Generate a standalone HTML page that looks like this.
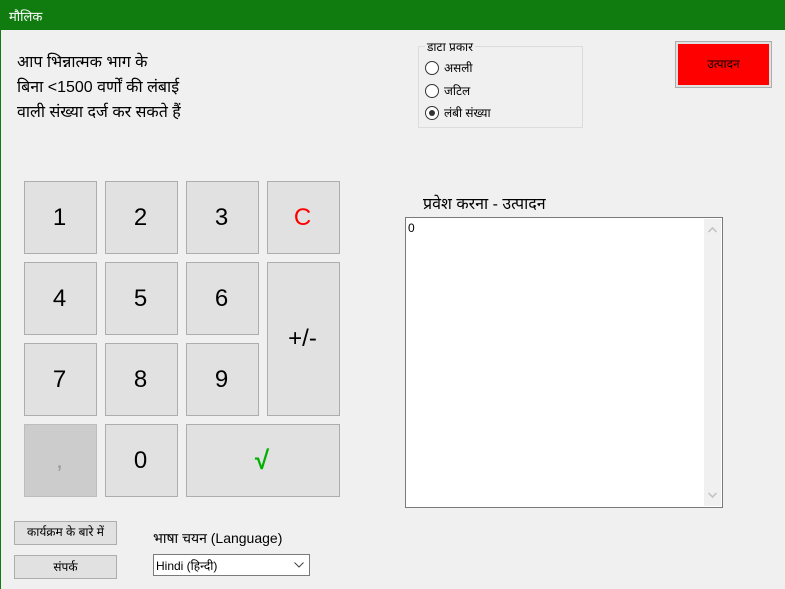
<!DOCTYPE html>
<html><head><meta charset="utf-8"><style>
*{box-sizing:border-box;margin:0;padding:0}
body{width:785px;height:589px;background:#f0f0f0;position:relative;overflow:hidden;font-family:"Liberation Sans","Noto Sans CJK SC",sans-serif;color:#000}
.a{position:absolute}
.title{left:0;top:0;width:785px;height:30px;background:#107c10;color:#fff;font-size:13px;padding:7px 0 0 9px}
.lb{left:0;top:30px;width:1px;height:559px;background:#107c10}
.k{position:absolute;width:73px;height:73px;background:#e1e1e1;border:1px solid #adadad;display:flex;align-items:center;justify-content:center;font-size:24px;padding-right:2px}
.rad{position:absolute;width:14px;height:14px;border:1px solid #333;border-radius:50%;background:#fff}
.btn{position:absolute;background:#e1e1e1;border:1px solid #adadad;font-size:12px;text-align:center}
</style></head><body>
<div class="a title">मौलिक</div>
<div class="a lb"></div>
<div class="a" style="left:17px;top:50px;font-size:16px;line-height:25px">आप भिन्नात्मक भाग के<br>बिना &lt;1500 वर्णों की लंबाई<br>वाली संख्या दर्ज कर सकते हैं</div>

<div class="a" style="left:418px;top:46px;width:165px;height:82px;border:1px solid #dcdcdc"></div>
<div class="a" style="left:425px;top:38px;background:#f0f0f0;padding:0 2px;font-size:12px">डाटा प्रकार</div>
<div class="rad" style="left:425px;top:61px"></div><div class="a" style="left:444px;top:59px;font-size:12px">असली</div>
<div class="rad" style="left:425px;top:84px"></div><div class="a" style="left:444px;top:82px;font-size:12px">जटिल</div>
<div class="rad" style="left:425px;top:106px"><div style="position:absolute;left:3px;top:3px;width:6px;height:6px;border-radius:50%;background:#333"></div></div><div class="a" style="left:444px;top:104px;font-size:12px">लंबी संख्या</div>

<div class="a" style="left:675px;top:41px;width:97px;height:47px;border:1px solid #adadad;background:#e1e1e1;padding:2px"><div style="width:100%;height:100%;background:#f00;font-size:12px;text-align:center;line-height:40px">उत्पादन</div></div>

<div class="k" style="left:24px;top:181px">1</div>
<div class="k" style="left:105px;top:181px">2</div>
<div class="k" style="left:186px;top:181px">3</div>
<div class="k" style="left:267px;top:181px;color:#f00">C</div>
<div class="k" style="left:24px;top:262px">4</div>
<div class="k" style="left:105px;top:262px">5</div>
<div class="k" style="left:186px;top:262px">6</div>
<div class="k" style="left:267px;top:262px;height:154px">+/-</div>
<div class="k" style="left:24px;top:343px">7</div>
<div class="k" style="left:105px;top:343px">8</div>
<div class="k" style="left:186px;top:343px">9</div>
<div class="k" style="left:24px;top:424px;background:#cccccc;border-color:#bdbdbd;color:#9a9a9a">,</div>
<div class="k" style="left:105px;top:424px">0</div>
<div class="k" style="left:186px;top:424px;width:154px;color:#00b000;font-weight:bold;font-size:26px">√</div>

<div class="a" style="left:423px;top:192px;font-size:16px">प्रवेश करना - उत्पादन</div>
<div class="a" style="left:405px;top:217px;width:318px;height:291px;border:1px solid #7a7a7a;background:#fff">
<div class="a" style="left:2px;top:3px;font-size:12px">0</div>
<div class="a" style="right:1px;top:1px;width:17px;height:287px;background:#f0f0f0">
<svg style="position:absolute;left:4px;top:8px" width="9" height="6"><path d="M0.5 5L4.5 1L8.5 5" stroke="#c0c0c0" stroke-width="1.5" fill="none"/></svg>
<svg style="position:absolute;left:4px;bottom:8px" width="9" height="6"><path d="M0.5 1L4.5 5L8.5 1" stroke="#c0c0c0" stroke-width="1.5" fill="none"/></svg>
</div>
</div>

<div class="btn" style="left:14px;top:521px;width:103px;height:24px;line-height:21px">कार्यक्रम के बारे में</div>
<div class="btn" style="left:14px;top:555px;width:103px;height:24px;line-height:22px">संपर्क</div>
<div class="a" style="left:153px;top:529px;font-size:14px">भाषा चयन (Language)</div>
<div class="a" style="left:153px;top:554px;width:157px;height:22px;border:1px solid #7a7a7a;background:#fff;font-size:12px;padding:2px 0 0 2px">Hindi (हिन्दी)
<svg style="position:absolute;right:5px;top:7px" width="10" height="6"><path d="M0.5 0.5L5 5L9.5 0.5" stroke="#444" fill="none"/></svg></div>
</body></html>
